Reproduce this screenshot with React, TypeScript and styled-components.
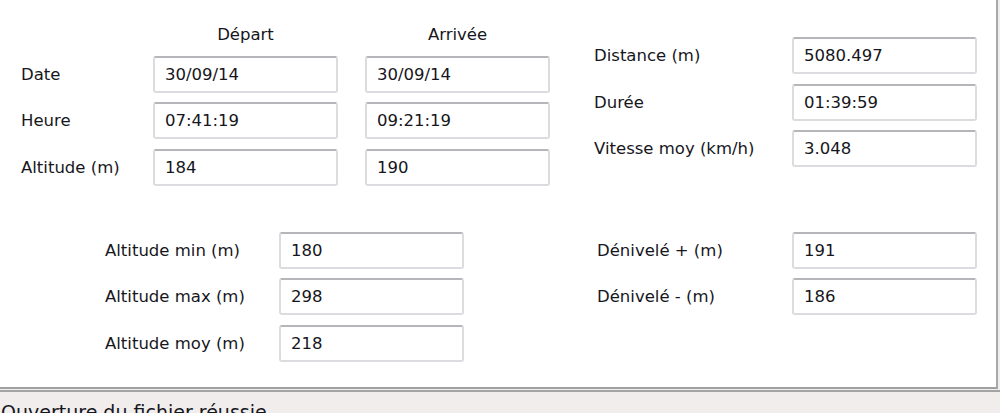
import styled, { createGlobalStyle } from "styled-components";

const GlobalStyle = createGlobalStyle`
  html, body {
    margin: 0;
    padding: 0;
    background: #f0edec;
  }
  body {
    font-family: "DejaVu Sans", Verdana, sans-serif;
    font-size: 16.5px;
    color: #16161c;
    overflow: hidden;
  }
`;

type Row = { label: string; value: string };

const trip = {
  date: ["30/09/14", "30/09/14"],
  time: ["07:41:19", "09:21:19"],
  altitude: ["184", "190"],
};

const summary: Row[] = [
  { label: "Distance (m)", value: "5080.497" },
  { label: "Durée", value: "01:39:59" },
  { label: "Vitesse moy (km/h)", value: "3.048" },
];

const altitudes: Row[] = [
  { label: "Altitude min (m)", value: "180" },
  { label: "Altitude max (m)", value: "298" },
  { label: "Altitude moy (m)", value: "218" },
];

const elevation: Row[] = [
  { label: "Dénivelé + (m)", value: "191" },
  { label: "Dénivelé - (m)", value: "186" },
];

export default function App() {
  return (
    <>
      <GlobalStyle />
      <Window>
        <Panel>
          <TopSection>
            <TripGrid>
              <span />
              <ColumnTitle>Départ</ColumnTitle>
              <ColumnTitle>Arrivée</ColumnTitle>

              <Label>Date</Label>
              <Field>{trip.date[0]}</Field>
              <Field>{trip.date[1]}</Field>

              <Label>Heure</Label>
              <Field>{trip.time[0]}</Field>
              <Field>{trip.time[1]}</Field>

              <Label>Altitude (m)</Label>
              <Field>{trip.altitude[0]}</Field>
              <Field>{trip.altitude[1]}</Field>
            </TripGrid>

            <StatGrid $labelWidth={198} $offset={44} $top={37}>
              {summary.map((r) => (
                <Pair key={r.label} row={r} />
              ))}
            </StatGrid>
          </TopSection>

          <BottomSection>
            <StatGrid $labelWidth={174} $offset={105} $top={0}>
              {altitudes.map((r) => (
                <Pair key={r.label} row={r} />
              ))}
            </StatGrid>
            <StatGrid $labelWidth={195} $offset={133} $top={0}>
              {elevation.map((r) => (
                <Pair key={r.label} row={r} />
              ))}
            </StatGrid>
          </BottomSection>
        </Panel>

        <StatusBar>Ouverture du fichier réussie</StatusBar>
      </Window>
    </>
  );
}

function Pair({ row }: { row: Row }) {
  return (
    <>
      <Label>{row.label}</Label>
      <Field>{row.value}</Field>
    </>
  );
}

const Window = styled.div`
  display: flex;
  flex-direction: column;
  width: 1000px;
  height: 413px;
  overflow: hidden;
`;

const Panel = styled.div`
  height: 389px;
  flex-shrink: 0;
  box-sizing: border-box;
  background: #ffffff;
  border-right: 2px solid #a8a8a8;
  border-bottom: 2px solid #a0a0a0;
  margin-right: 2px;
  display: flex;
  flex-direction: column;
`;

const TopSection = styled.div`
  display: flex;
  padding-left: 21px;
`;

const TripGrid = styled.div`
  display: grid;
  grid-template-columns: 105px 185px 185px;
  grid-template-rows: 23px repeat(3, 37px);
  column-gap: 27px;
  row-gap: 9.5px;
  padding-top: 23px;
  align-items: center;
`;

const ColumnTitle = styled.div`
  text-align: center;
  line-height: 23px;
`;

const StatGrid = styled.div<{ $labelWidth: number; $offset: number; $top: number }>`
  display: grid;
  grid-template-columns: ${(p) => p.$labelWidth}px 185px;
  grid-auto-rows: 37px;
  row-gap: 9.5px;
  align-items: center;
  margin-left: ${(p) => p.$offset}px;
  padding-top: ${(p) => p.$top}px;
  align-self: flex-start;
`;

const BottomSection = styled.div`
  display: flex;
  margin-top: 46px;
`;

const Label = styled.div`
  white-space: nowrap;
`;

const Field = styled.div`
  box-sizing: border-box;
  height: 37px;
  display: flex;
  align-items: center;
  padding-left: 10px;
  background: #ffffff;
  border: 2px solid #dadcdf;
  border-top-color: #b4b6ba;
  border-radius: 3px;
  white-space: nowrap;
`;

const StatusBar = styled.div`
  flex-shrink: 0;
  height: 40px;
  margin-top: 1px;
  border-top: 2px solid #a4a4a4;
  background: #f0edec;
  padding: 9px 0 0 1px;
  font-size: 19px;
  line-height: 22px;
  white-space: nowrap;
`;
